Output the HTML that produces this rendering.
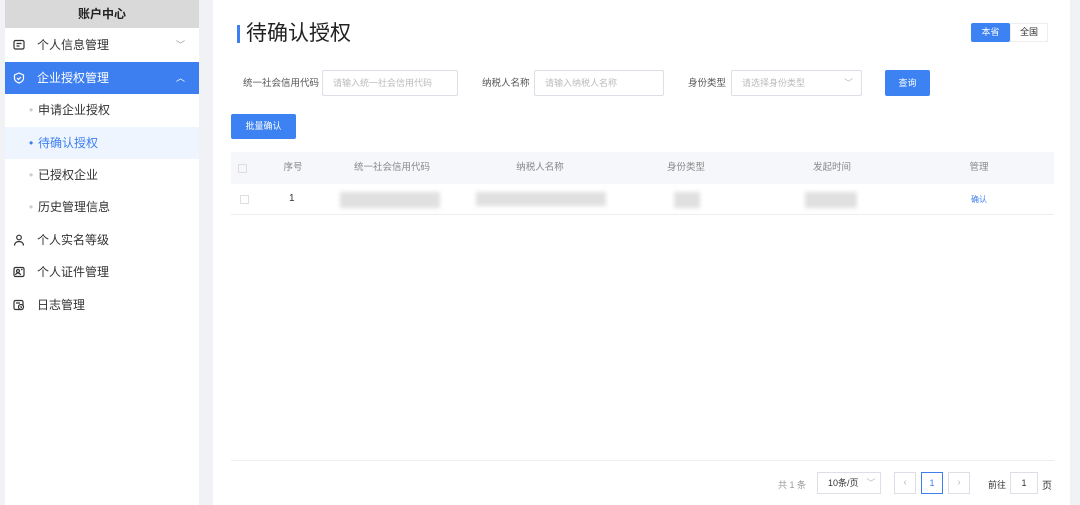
<!DOCTYPE html>
<html><head><meta charset="utf-8"><style>
*{margin:0;padding:0;box-sizing:border-box}
body{width:1080px;height:505px;background:#f0f2f5;font-family:"Liberation Sans","Noto Sans CJK SC",sans-serif;position:relative;overflow:hidden;color:#333}
.a{position:absolute}
.side{left:5px;top:0;width:194px;height:505px;background:#fff}
.shead{left:0;top:0;width:194px;height:28px;background:#d9d9d9;text-align:center;line-height:28px;font-size:12px;font-weight:bold;color:#222}
.it{left:0;width:194px;height:32px;line-height:32px;font-size:12px;color:#333}
.main{left:213px;top:0;width:857px;height:505px;background:#fff}
.lbl{font-size:9.5px;color:#555;line-height:26px}
.inp{height:26px;border:1px solid #dcdfe6;border-radius:2px;font-size:9px;color:#bbb;line-height:24px;padding-left:10px}
.btn{background:#3d82f2;color:#fff;font-size:9px;text-align:center;border-radius:2px}
.th{font-size:9.5px;color:#888;line-height:32px;text-align:center}
.blur{background:#e0e0e0;filter:blur(2px)}
.cb{width:9px;height:9px;border:1px solid #ddd;border-radius:1px}
</style></head><body>
<div class="a side">
<div class="a shead">账户中心</div>
<div class="a it" style="top:29px"><svg class="a" style="left:8px;top:10px" width="12" height="12" viewBox="0 0 12 12" fill="none" stroke="#333" stroke-width="1.2"><rect x="1" y="1.5" width="10" height="8.5" rx="1.5"/><path d="M3.5 4.5h5M3.5 7h3"/></svg><span class="a" style="left:32px">个人信息管理</span><span class="a" style="left:171px;color:#999;font-size:9px">﹀</span></div>
<div class="a it" style="top:62px;background:#3d7ff0;color:#fff"><svg class="a" style="left:8px;top:10px" width="12" height="12" viewBox="0 0 12 12" fill="none" stroke="#fff" stroke-width="1.2"><path d="M6 1l4.5 2v3.5c0 2-2 3.8-4.5 4.5C3.5 10.3 1.5 8.5 1.5 6.5V3z"/><path d="M4 6l1.5 1.5L8 5"/></svg><span class="a" style="left:32px">企业授权管理</span><span class="a" style="left:171px;font-size:9px">︿</span></div>
<div class="a it" style="top:94px"><span class="a" style="left:24px;color:#ccc">•</span><span class="a" style="left:33px">申请企业授权</span></div>
<div class="a it" style="top:127px;background:#eef5ff;color:#3d7ff0"><span class="a" style="left:24px">•</span><span class="a" style="left:33px">待确认授权</span></div>
<div class="a it" style="top:159px"><span class="a" style="left:24px;color:#ccc">•</span><span class="a" style="left:33px">已授权企业</span></div>
<div class="a it" style="top:191px"><span class="a" style="left:24px;color:#ccc">•</span><span class="a" style="left:33px">历史管理信息</span></div>
<div class="a it" style="top:224px"><svg class="a" style="left:8px;top:10px" width="12" height="13" viewBox="0 0 12 13" fill="none" stroke="#333" stroke-width="1.2"><circle cx="6" cy="3.5" r="2.3"/><path d="M1.5 11.5c0-2.5 2-4 4.5-4s4.5 1.5 4.5 4"/></svg><span class="a" style="left:32px">个人实名等级</span></div>
<div class="a it" style="top:256px"><svg class="a" style="left:8px;top:10px" width="12" height="12" viewBox="0 0 12 12" fill="none" stroke="#333" stroke-width="1.2"><rect x="1" y="1.5" width="10" height="9" rx="1.5"/><circle cx="5" cy="5" r="1.5"/><path d="M2.5 9c.5-1.5 1.5-2 2.5-2s2 .5 2.5 2M8 3.5h1.5"/></svg><span class="a" style="left:32px">个人证件管理</span></div>
<div class="a it" style="top:289px"><svg class="a" style="left:8px;top:10px" width="12" height="12" viewBox="0 0 12 12" fill="none" stroke="#333" stroke-width="1.2"><rect x="1" y="1.5" width="9" height="9" rx="1.5"/><circle cx="8" cy="8" r="2.5" fill="#fff"/><path d="M8 7v1.2l.8.6M3 4h4"/></svg><span class="a" style="left:32px">日志管理</span></div>
</div>
<div class="a main"></div>
<div class="a" style="left:237px;top:25px;width:3px;height:18px;background:#3d7ff0"></div>
<div class="a" style="left:246px;top:20px;font-size:21px;line-height:28px;color:#222">待确认授权</div>
<div class="a btn" style="left:971px;top:23px;width:39px;height:19px;line-height:19px">本省</div>
<div class="a" style="left:1010px;top:23px;width:38px;height:19px;line-height:17px;border:1px solid #eee;font-size:9px;text-align:center">全国</div>
<div class="a lbl" style="left:243px;top:71px">统一社会信用代码</div>
<div class="a inp" style="left:322px;top:70px;width:136px">请输入统一社会信用代码</div>
<div class="a lbl" style="left:482px;top:71px">纳税人名称</div>
<div class="a inp" style="left:534px;top:70px;width:130px">请输入纳税人名称</div>
<div class="a lbl" style="left:688px;top:71px">身份类型</div>
<div class="a inp" style="left:731px;top:70px;width:131px">请选择身份类型<span class="a" style="left:112px;color:#bbb">﹀</span></div>
<div class="a btn" style="left:885px;top:70px;width:45px;height:26px;line-height:26px">查询</div>
<div class="a btn" style="left:231px;top:114px;width:65px;height:25px;line-height:25px">批量确认</div>
<div class="a" style="left:231px;top:152px;width:823px;height:32px;background:#f5f7fa"></div>
<div class="a cb" style="left:238px;top:164px"></div>
<div class="a th" style="left:273px;top:152px;width:40px">序号</div>
<div class="a th" style="left:332px;top:152px;width:120px">统一社会信用代码</div>
<div class="a th" style="left:480px;top:152px;width:120px">纳税人名称</div>
<div class="a th" style="left:646px;top:152px;width:80px">身份类型</div>
<div class="a th" style="left:792px;top:152px;width:80px">发起时间</div>
<div class="a th" style="left:959px;top:152px;width:40px">管理</div>
<div class="a cb" style="left:240px;top:195px"></div>
<div class="a" style="left:289px;top:193px;font-size:10px">1</div>
<div class="a blur" style="left:340px;top:192px;width:100px;height:16px"></div>
<div class="a blur" style="left:476px;top:192px;width:130px;height:14px"></div>
<div class="a blur" style="left:674px;top:192px;width:26px;height:16px"></div>
<div class="a blur" style="left:805px;top:192px;width:52px;height:16px"></div>
<div class="a" style="left:971px;top:194px;font-size:8px;color:#3d7ff0">确认</div>
<div class="a" style="left:231px;top:214px;width:823px;height:1px;background:#eee"></div>
<div class="a" style="left:231px;top:460px;width:823px;height:1px;background:#eee"></div>
<div class="a" style="left:778px;top:478px;font-size:9px;color:#999">共 1 条</div>
<div class="a" style="left:817px;top:472px;width:64px;height:22px;border:1px solid #dcdfe6;font-size:9px;line-height:20px;padding-left:10px">10条/页<span style="color:#bbb;margin-left:8px">﹀</span></div>
<div class="a" style="left:894px;top:472px;width:22px;height:22px;border:1px solid #dcdfe6;font-size:10px;line-height:20px;text-align:center;color:#bbb">‹</div>
<div class="a" style="left:921px;top:472px;width:22px;height:22px;border:1px solid #3d7ff0;font-size:9px;line-height:20px;text-align:center;color:#3d7ff0">1</div>
<div class="a" style="left:948px;top:472px;width:22px;height:22px;border:1px solid #dcdfe6;font-size:10px;line-height:20px;text-align:center;color:#bbb">›</div>
<div class="a" style="left:988px;top:478px;font-size:9px">前往</div>
<div class="a" style="left:1010px;top:472px;width:28px;height:22px;border:1px solid #dcdfe6;font-size:9px;line-height:20px;text-align:center">1</div>
<div class="a" style="left:1042px;top:477px;font-size:10px">页</div>
</body></html>
